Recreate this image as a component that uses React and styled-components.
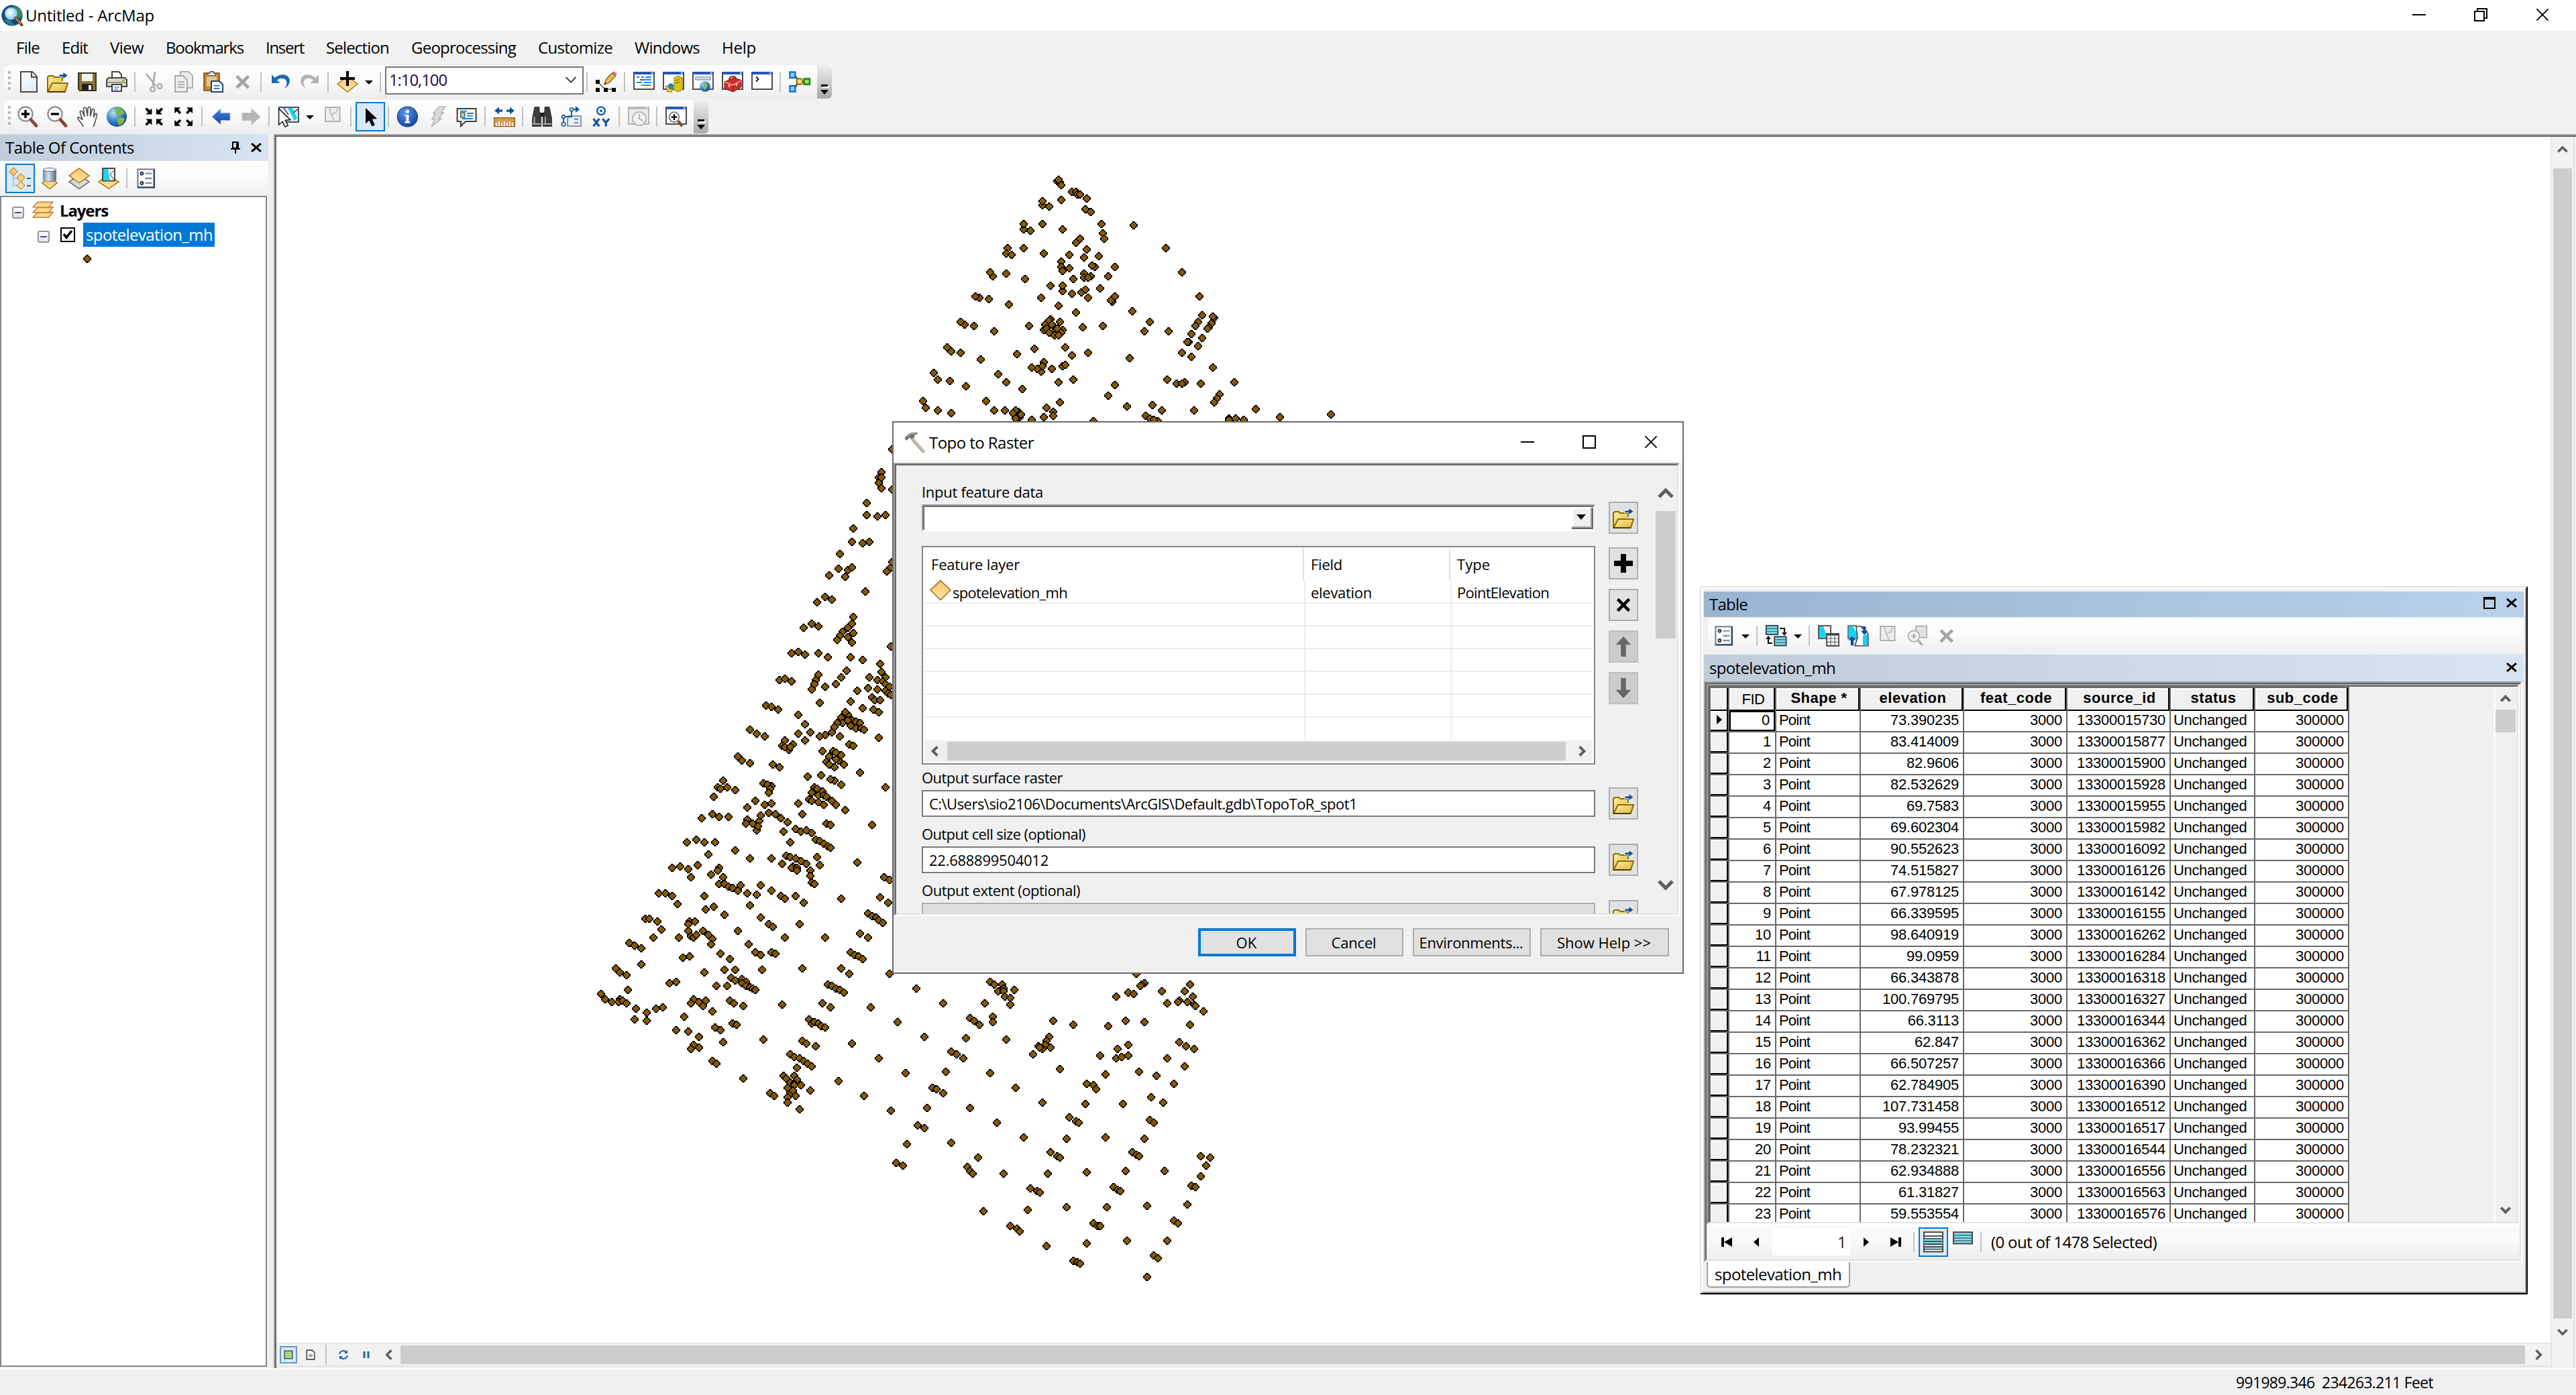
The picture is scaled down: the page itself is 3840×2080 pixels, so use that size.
import React, { useLayoutEffect, useRef } from "react";
import styled, { createGlobalStyle, css } from "styled-components";

/* ---------- base ---------- */

const UI = `"Open Sans", "Noto Sans", sans-serif`;
const GRID = `"Liberation Sans", Arial, sans-serif`;
const DARK = "#696969";
const MID = "#a0a0a0";
const LIGHT = "#e3e3e3";
const FACE = "#f0f0f0";
const BLUE = "#0078d7";

const Global = createGlobalStyle`
  html, body { margin: 0; padding: 0; background: ${FACE}; }
  * { box-sizing: border-box; }
`;

const LabelBox = styled.span`
  display: block;
  flex: none;
  width: ${(p) => p.$w}px;
  font-family: ${UI};
  font-size: ${(p) => p.$size || 24}px;
  font-weight: ${(p) => (p.$bold ? 700 : 400)};
  line-height: 30px;
  white-space: pre;
  color: ${(p) => p.$color || "#000"};
`;

/* A label whose tracking is set so that the text spans exactly w pixels. */
function Label({ w, size, bold, color, children }) {
  const ref = useRef(null);
  useLayoutEffect(() => {
    const el = ref.current;
    el.style.letterSpacing = "0px";
    const natural = el.getBoundingClientRect().width;
    el.style.letterSpacing = `${(w - natural) / String(children).length}px`;
  }, [w, children]);
  return (
    <LabelBox $w={w} $size={size} $bold={bold} $color={color}>
      <span ref={ref}>{children}</span>
    </LabelBox>
  );
}

const Svg = styled.svg`
  display: block;
  flex: none;
  width: ${(p) => p.$w || 32}px;
  height: ${(p) => p.$h || p.$w || 32}px;
  overflow: visible;
`;

const Icon = ({ children, size }) => (
  <Svg viewBox="0 0 16 16" $w={size}>
    {children}
  </Svg>
);

/* ---------- icons (16-unit grid) ---------- */

const DefsSvg = styled.svg`
  position: absolute;
  width: 0;
  height: 0;
`;

const Defs = () => (
  <DefsSvg aria-hidden="true">
    <defs>
      <linearGradient id="gold" x1="0" y1="0" x2="0" y2="1">
        <stop offset="0" stopColor="#f3c469" />
        <stop offset="1" stopColor="#ffe9a8" />
      </linearGradient>
      <linearGradient id="folder" x1="0" y1="0" x2="1" y2="1">
        <stop offset="0" stopColor="#fff0a0" />
        <stop offset="1" stopColor="#dcb53a" />
      </linearGradient>
      <linearGradient id="paper" x1="0" y1="0" x2="1" y2="1">
        <stop offset="0" stopColor="#ffffff" />
        <stop offset="1" stopColor="#dbe8f3" />
      </linearGradient>
      <linearGradient id="steel" x1="0" y1="0" x2="1" y2="0">
        <stop offset="0" stopColor="#7f90a5" />
        <stop offset="0.4" stopColor="#d8e2ee" />
        <stop offset="1" stopColor="#54687f" />
      </linearGradient>
      <linearGradient id="bluearrow" x1="0" y1="0" x2="0" y2="1">
        <stop offset="0" stopColor="#4b86e4" />
        <stop offset="1" stopColor="#123f9e" />
      </linearGradient>
      <radialGradient id="info" cx="0.4" cy="0.3" r="0.8">
        <stop offset="0" stopColor="#5b95ea" />
        <stop offset="1" stopColor="#0c3d9c" />
      </radialGradient>
      <radialGradient id="globe" cx="0.35" cy="0.3" r="0.8">
        <stop offset="0" stopColor="#bfe2fb" />
        <stop offset="0.5" stopColor="#3d86d0" />
        <stop offset="1" stopColor="#0d3c7c" />
      </radialGradient>
      <radialGradient id="lens" cx="0.4" cy="0.4" r="0.7">
        <stop offset="0" stopColor="#ffffff" />
        <stop offset="1" stopColor="#7cc6ec" />
      </radialGradient>
    </defs>
  </DefsSvg>
);

const AppLogo = () => (
  <Icon>
    <circle cx="8" cy="8" r="7.8" fill="#0f4a78" />
    <path d="M8 .4c4 0 7.4 3.2 7.5 7.4-1 2.4-2.6 3.2-4.4 2.2C12 6 9.600 3 8 .4z" fill="#2f8d63" />
    <path d="M2 11c1.500 3 4.500 4.600 8 4.200L6 11z" fill="#1f7f9a" />
    <circle cx="7.200" cy="6.600" r="4.300" fill="url(#lens)" stroke="#9fc6dc" strokeWidth="0.8" />
    <path d="M10.600 10l4.600 5" stroke="#6b3b1a" strokeWidth="2.200" strokeLinecap="round" />
    <path d="M10.600 10l4 4.300" stroke="#d8955a" strokeWidth="0.9" strokeLinecap="round" />
  </Icon>
);

const NewIcon = () => (
  <Icon>
    <path d="M2.500.5h8.500l3.500 3.500v11.500h-12z" fill="url(#paper)" stroke="#4a4a4a" />
    <path d="M10.500.5v4h4" fill="#fff" stroke="#4a4a4a" />
  </Icon>
);

const OpenIcon = () => (
  <Icon>
    <path d="M.5 15.500V4.500l1-1h3l1 1h6v3" fill="url(#folder)" stroke="#8a6d00" />
    <path d="M.7 15.500L4 9h11.500l-2 6.500z" fill="url(#folder)" stroke="#8a6d00" />
    <path d="M.5 15.500h13" stroke="#4f3d00" />
    <path d="M9 4.500V2.500h3V.7l3.600 2.600L12 5.900V4.300H9z" fill="#0b4fa3" stroke="#fff" strokeWidth="0.4" />
  </Icon>
);

const SaveIcon = () => (
  <Icon>
    <path d="M1.500 1.500h13v13h-12l-1-1z" fill="#8e7434" stroke="#3d3218" />
    <rect x="4" y="2" width="8" height="5.500" fill="#f2f2f2" />
    <rect x="4" y="9.500" width="8" height="5" fill="#222" />
    <rect x="9" y="10.500" width="2" height="3.500" fill="#f0f0f0" />
  </Icon>
);

const PrintIcon = () => (
  <Icon>
    <path d="M4.500 6V.5h5l2 2V6" fill="#fff" stroke="#444" />
    <path d="M.5 6.500l1.500-1.500h12l1.500 1.500v5h-15z" fill="#d9d8c4" stroke="#444" />
    <path d="M1 8.500h14" stroke="#777" strokeWidth="0.7" />
    <rect x="12" y="6.300" width="2" height="1.200" fill="#8fae3c" />
    <path d="M4.500 10h7v5h-7z" fill="#fff" stroke="#444" />
    <path d="M6 12h4M6 13.500h3" stroke="#4b86d8" strokeWidth="0.8" />
  </Icon>
);

const CutIcon = () => (
  <Icon>
    <path d="M2 2l7 9M8.500.5L7 11" stroke="#ababab" strokeWidth="1.400" fill="none" />
    <circle cx="6.800" cy="13.500" r="1.700" fill="none" stroke="#ababab" strokeWidth="1.200" />
    <circle cx="12" cy="11.300" r="1.700" fill="none" stroke="#ababab" strokeWidth="1.200" />
  </Icon>
);

const CopyIcon = () => (
  <Icon>
    <path d="M5.500.5h6l3 3v9h-9z" fill="#ededed" stroke="#b0b0b0" />
    <path d="M1.500 3.500h6l3 3v9h-9z" fill="#ededed" stroke="#a8a8a8" />
    <path d="M3.500 8h5M3.500 10h5M3.500 12h5" stroke="#b0b0b0" />
  </Icon>
);

const PasteIcon = () => (
  <Icon>
    <rect x="1" y="1.500" width="11.500" height="13" fill="#c4873a" stroke="#7a4b12" strokeWidth="0.8" />
    <rect x="3" y="3.500" width="7.500" height="8" fill="#e9c48d" />
    <path d="M4 3.500v-2h1.500V.4h2.600v1.100H9.600v2z" fill="#e8e8e8" stroke="#555" strokeWidth="0.7" />
    <path d="M6.500 7.500h6l2.500 2.500v5.500H6.500z" fill="#fff" stroke="#1e4470" />
    <path d="M8.300 11h4.500M8.300 13h4.500" stroke="#2f80d0" />
  </Icon>
);

const GrayX = () => (
  <Icon>
    <path d="M3.400 3.800l8.800 8.600M12.200 3.800l-8.800 8.600" stroke="#a6a6a6" strokeWidth="2.400" fill="none" />
  </Icon>
);

const UndoIcon = ({ flip, color = "#1f66ad" }) => (
  <Icon>
    <g transform={flip ? "translate(16 0) scale(-1 1)" : undefined}>
      <path d="M1.500 2.500V9h6.200L5.500 6.700c2-1.700 5.500-1.800 6.800.4 1 1.900.3 3.900-1.600 5.900 3.700-2 5.100-4.900 3.700-7.900C12.600 2 7.600 1.600 3.800 5z" fill={color} />
    </g>
  </Icon>
);

const AddDataIcon = () => (
  <Icon>
    <path d="M8 4l7.500 5.500L8 15.500.5 9.500z" fill="url(#gold)" stroke="#a9741b" strokeWidth="0.7" />
    <path d="M8 0v11M2.500 5.500h11" stroke="#000" strokeWidth="2" />
  </Icon>
);

const EditorIcon = () => (
  <Icon>
    <path d="M1.500 8L7 13.500H14.500" fill="none" stroke="#555" strokeWidth="0.7" />
    <path d="M0 6.500h3v3H0zM0 12.500h3v3H0zM6 12.500h3v3H6zM12 12.500h3v3h-3z" fill="#000" />
    <path d="M6.500 10l1.200-3.700L12 1.500l2.700 2.200-4.500 4.800z" fill="#f2c04a" stroke="#6a4b12" strokeWidth="0.6" />
    <path d="M12 1.500L13.300 0l2.700 2.200-1.300 1.500z" fill="#c96f6f" />
    <path d="M6.500 10l.6-1.700 1.100.9z" fill="#222" />
  </Icon>
);

const WindowFrame = ({ gray }) => (
  <>
    <rect x="0.5" y="1" width="15" height="12.500" fill={gray ? "#ececec" : "#fff"} stroke={gray ? "#b4b4b4" : "#4d4d4d"} />
    <rect x="0.5" y="0.5" width="15" height="2" fill={gray ? "#b8b8b8" : "#2456b8"} />
    <rect x="13.500" y="1" width="1.200" height="1" fill="#e9eefb" />
  </>
);

const TocWindowIcon = () => (
  <Icon>
    <WindowFrame />
    <path d="M2.500 4.500h2M6 4.500h2M9 4.500h4.500M5 6.500h8.500M2.500 8.500h4M8 8.500h5.500M6 10.500h7" stroke="#1f86e0" strokeWidth="0.9" />
    <path d="M5 6.500h2" stroke="#e02020" />
    <path d="M5.500 10.500h2" stroke="#6fc020" />
  </Icon>
);
const CatalogIcon = () => (
  <Icon>
    <WindowFrame />
    <path d="M8.500 5l3-1.500 3 1.500v9l-3 1.500-3-1.500z" fill="#dcc315" stroke="#8a7a00" strokeWidth="0.5" />
    <path d="M9.500 7l3-.8M9.500 9l3-.8" stroke="#776800" strokeWidth="0.6" />
    <path d="M2 11h5v4.500H3.500z" fill="#e6cc1d" stroke="#8a7a00" strokeWidth="0.5" />
    <circle cx="6" cy="11.300" r="2.200" fill="#2d7fb8" />
  </Icon>
);
const SearchWindowIcon = () => (
  <Icon>
    <WindowFrame />
    <rect x="2.500" y="4.500" width="11" height="2" fill="#d5dff0" stroke="#8a97b3" strokeWidth="0.7" />
    <circle cx="9.500" cy="11.500" r="3.900" fill="url(#globe)" />
    <path d="M8 8.500l2.500.6.500 2.400-2 2.800z" fill="#7fc25b" />
  </Icon>
);
const ToolboxIcon = () => (
  <Icon>
    <WindowFrame />
    <path d="M2 8L9 5l5.500 1.800v5L8.500 15.500 2 13z" fill="#cf2f2f" stroke="#7a1010" strokeWidth="0.5" />
    <path d="M2.300 8.300l6 2.200 6-3.400" fill="none" stroke="#f39a9a" strokeWidth="0.8" />
    <path d="M5.500 6.700c0-2.700 4.500-3.700 5-1.200" fill="none" stroke="#a51a1a" strokeWidth="1.100" />
    <path d="M5.500 10v2M11 9v1.800" stroke="#f9dcdc" strokeWidth="1" />
    <path d="M8.400 10.700v4.500" stroke="#8e1414" strokeWidth="0.6" />
  </Icon>
);
const PythonIcon = () => (
  <Icon>
    <WindowFrame />
    <path d="M3.500 4.300L5.300 6 3.500 7.700" fill="none" stroke="#222" />
  </Icon>
);
const ModelIcon = () => (
  <Icon>
    <path d="M4 2.500l3 4.500M4 13.500l3-5.500M10 8h1.500" stroke="#222" fill="none" />
    <rect x="0.7" y="0.7" width="4" height="4.300" fill="#8cc8f8" stroke="#1670c8" strokeWidth="1.200" />
    <rect x="0.7" y="11" width="4" height="4.300" fill="#8cc8f8" stroke="#1670c8" strokeWidth="1.200" />
    <circle cx="8" cy="7.800" r="2.200" fill="#ffe28a" stroke="#9a7000" strokeWidth="1.100" />
    <rect x="11.300" y="5.700" width="4.200" height="4.200" fill="#8be069" stroke="#17830d" strokeWidth="1.200" />
  </Icon>
);

const Magnifier = ({ sign }) => (
  <Icon>
    <circle cx="6" cy="6" r="5.300" fill="#fff" stroke="#8b8b8b" strokeWidth="1.100" />
    <path d={sign === "+" ? "M3 6h6M6 3v6" : "M3 6h6"} stroke="#000" strokeWidth="1.700" />
    <path d="M10 10.200l4 4.500" stroke="#8d4141" strokeWidth="2.400" strokeLinecap="round" />
  </Icon>
);
const HandIcon = () => (
  <Icon>
    <path
      d="M5 15.500C4.500 13 1 10.500.8 8.800c.9-1 2.600.5 3.700 1.700L2.600 4.500c.3-1.400 1.600-1 2 .1L6 8 5.300 2c.4-1.300 1.700-1.100 2 .1L8.300 7.500 8.500 1.500c.5-1.100 1.700-.9 1.900.2v6l1.200-4.900c.6-.9 1.700-.5 1.700.5l-.6 5.200 1.200-2.700c.7-.6 1.500-.1 1.300.9-.5 2.500-1.300 6-2.700 8.800"
      fill="#fff"
      stroke="#4b4b4b"
      strokeWidth="0.8"
    />
  </Icon>
);
const GlobeIcon = () => (
  <Icon>
    <circle cx="8" cy="8" r="7.500" fill="url(#globe)" />
    <path d="M6.500 1.500c3-.8 6 .8 7.300 3.500-.4 1.600-2.300 1-3.300 2.200-1.400.2-3.200-1-3.500-2.700zM9 8.800c2-.8 4.300-.2 5 1.200-.8 2.600-2.700 4.300-4.300 4.400C8.600 12.900 8 10.500 9 8.800z" fill="#7fb84a" />
  </Icon>
);
const ArrowHead = ({ x, y, r }) => (
  <g transform={`translate(${x} ${y}) rotate(${r})`}>
    <path d="M-2.500 2V-2.500H2L.4-1 2.500 1.300 1.300 2.500-1 .4z" fill="#000" />
  </g>
);
const FixedIn = () => (
  <Icon>
    <ArrowHead x={3.700} y={3.700} r={180} />
    <ArrowHead x={12} y={3.700} r={270} />
    <ArrowHead x={3.700} y={12.300} r={90} />
    <ArrowHead x={12} y={12.300} r={0} />
  </Icon>
);
const FixedOut = () => (
  <Icon>
    <ArrowHead x={3.600} y={3.600} r={0} />
    <ArrowHead x={12} y={3.600} r={90} />
    <ArrowHead x={3.600} y={12.400} r={270} />
    <ArrowHead x={12} y={12.400} r={180} />
  </Icon>
);
const BackIcon = ({ flip, gray }) => (
  <Icon>
    <g transform={flip ? "translate(16 0) scale(-1 1)" : undefined}>
      <path d="M1 8l6.500-6v3.200h7v5.600h-7V14z" fill={gray ? "#b5b5b5" : "url(#bluearrow)"} stroke={gray ? "#c4c4c4" : "#a9c0ee"} strokeWidth="0.5" />
    </g>
  </Icon>
);
const SelectIcon = () => (
  <Icon>
    <rect x="1" y="1" width="14.500" height="11" fill="#e8eef2" stroke="#4b5560" />
    <path d="M7.500 1.500h3.500l3.500 7.500-2 2z" fill="#16d3ee" />
    <path d="M4.500 1.500l3.500 5M15 2.500l-3.500 2.500" stroke="#4b5560" strokeWidth="0.8" />
    <path d="M.8 2v12l2.800-2.400 1.900 4 2.100-1-1.900-3.900 3.700-.4z" fill="#fff" stroke="#222" strokeWidth="0.8" />
  </Icon>
);
const ClearIcon = () => (
  <Icon>
    <rect x="2.500" y="1" width="10.800" height="10.500" fill="#ededed" stroke="#b2b2b2" />
    <path d="M5.500 1.500l1.500 5 3.500-1.500 1-3.500M7 6.500l2 4.500" fill="none" stroke="#c2c2c2" />
  </Icon>
);
const PointerIcon = () => (
  <Icon>
    <path d="M4.500 1.500v11.700l2.700-2.500 2 4.600 2.200-1-2-4.400 3.600-.4z" fill="#0a0a0a" />
  </Icon>
);
const InfoIcon = () => (
  <Icon>
    <circle cx="7.700" cy="8" r="7.500" fill="url(#info)" stroke="#163f8c" strokeWidth="0.6" />
    <circle cx="7.700" cy="4" r="1.300" fill="#fff" />
    <path d="M5.700 6.600h3v5h1v1.200h-4v-1.200h1V7.800h-1z" fill="#fff" />
  </Icon>
);
const BoltIcon = () => (
  <Icon>
    <path d="M9.500.5H14L10.500 5H12.500L9 9.500H11L3.500 15.500 6 10H4L6.500 5.500H5z" fill="#dcdcdc" stroke="#b5b5b5" strokeWidth="0.8" />
  </Icon>
);
const PopupIcon = () => (
  <Icon>
    <path d="M.8 2h14v9.500H7L3.500 15v-3.500H.8z" fill="#fff" stroke="#3c3c3c" />
    <rect x="3.300" y="4.800" width="3" height="3.700" fill="#f3cf3e" stroke="#2271c4" strokeWidth="0.8" />
    <path d="M3 3.800h5M8 5.500h5M8 7.300h4.500M4.500 9.500h8" stroke="#1d7ad6" strokeWidth="0.9" />
  </Icon>
);
const MeasureIcon = () => (
  <Icon>
    <path d="M.5 3.500L4 .8v1.900h2.500v1.700H4v1.800zM15.500 3.500L12 .8v1.900H9.500v1.700H12v1.800z" fill="#0c4f9e" />
    <rect x="0.300" y="8.800" width="15.400" height="6.500" fill="#d59a52" stroke="#8a5415" strokeWidth="0.6" />
    <path d="M2 15v-2.500M4 15v-3.500M6 15v-2.500M8 15v-3.500M10 15v-2.500M12 15v-3.500M14 15v-2.500" stroke="#fff" strokeWidth="0.900" />
  </Icon>
);
const FindIcon = () => (
  <Icon>
    <path d="M2.500.8h3.500v3l1.300 2.400v9H.8V9zM13.500.8H10v3L8.700 6.200v9h6.500V9z" fill="#3c3c3c" stroke="#222" strokeWidth="0.4" />
    <rect x="6.500" y="5" width="3" height="3" fill="#222" />
    <path d="M2.300 8v5M10.400 8v5" stroke="#9a9a9a" strokeWidth="1.100" />
    <path d="M1 13.400h6M9 13.400h6" stroke="#d0d0d0" strokeWidth="0.7" />
  </Icon>
);
const RouteIcon = () => (
  <Icon>
    <path d="M6 7.500h9v7.500H5V10z" fill="#e8f0f6" stroke="#5b7ea0" strokeWidth="0.8" />
    <path d="M10 9.800h3M10 12.500h3" stroke="#3b6a98" strokeWidth="0.8" />
    <path d="M2 13.500V8h6V2.500h4" fill="none" stroke="#0f5aa6" />
    <path d="M11 0l3 2.500-3 2.500z" fill="#0f5aa6" />
    <circle cx="2" cy="8" r="1.200" fill="#fff" stroke="#0f5aa6" strokeWidth="0.8" />
    <circle cx="2" cy="13.600" r="1.400" fill="#fff" stroke="#0f5aa6" strokeWidth="0.8" />
    <circle cx="8" cy="2.600" r="1.200" fill="#fff" stroke="#0f5aa6" strokeWidth="0.8" />
  </Icon>
);
const GoToXYIcon = () => (
  <Icon>
    <circle cx="8" cy="3.600" r="2.900" fill="#fff" stroke="#125fae" strokeWidth="1.200" />
    <circle cx="8" cy="3.600" r="1" fill="#125fae" />
    <path d="M2.300 9.500l4.400 5.700M6.700 9.500l-4.400 5.700M9.200 9.500l2.400 3 2.400-3M11.600 12v3.300" fill="none" stroke="#0f4f96" strokeWidth="1.500" />
  </Icon>
);
const TimeIcon = () => (
  <Icon>
    <WindowFrame gray />
    <circle cx="8.500" cy="9.500" r="5" fill="#f1f1f1" stroke="#bbb" />
    <path d="M8.500 6v3.500l2.500 1.500" fill="none" stroke="#b0b0b0" />
  </Icon>
);
const ViewerIcon = () => (
  <Icon>
    <WindowFrame />
    <circle cx="6.500" cy="8.300" r="3.700" fill="#fff" stroke="#777" strokeWidth="0.900" />
    <path d="M4.300 8.300h4.400M6.500 6.100v4.400" stroke="#000" strokeWidth="1.200" />
    <path d="M9.500 11.300l3 3.700" stroke="#8d4141" strokeWidth="2.200" />
  </Icon>
);

const DrawingOrderIcon = () => (
  <Icon>
    <path d="M3 3v10.500h5M3 8h5" fill="none" stroke="#a9c8de" />
    <path d="M3 0l3 3-3 3-3-3zM8.500 4.500l3 3-3 3-3-3zM8.500 10.300l3 2.900-3 2.900-3-2.900z" fill="url(#gold)" stroke="#c48a32" strokeWidth="0.6" />
    <path d="M13 8h3M13 13.500h3" stroke="#2a6a98" strokeWidth="1.100" />
  </Icon>
);
const SourceIcon = () => (
  <Icon>
    <path d="M2.300 11.300L8 8l5.700 3.300L8 15.800z" fill="url(#gold)" stroke="#a9741b" strokeWidth="0.7" />
    <path d="M3.200 1.400v7.800c0 1.700 9.600 1.700 9.600 0V1.400z" fill="url(#steel)" stroke="#5f7288" strokeWidth="0.4" />
    <ellipse cx="8" cy="1.500" rx="4.800" ry="1.300" fill="#eef3f8" stroke="#5f7288" strokeWidth="0.5" />
  </Icon>
);
const VisibilityIcon = () => (
  <Icon>
    <path d="M8 5.500l7.500 5L8 15.800l-7.500-5.300z" fill="#d9d9d9" stroke="#707070" strokeWidth="0.8" />
    <path d="M8 .4l7.500 5.600L8 11.300.5 6z" fill="url(#gold)" stroke="#b77c1d" strokeWidth="0.8" />
  </Icon>
);
const SelectionListIcon = () => (
  <Icon>
    <path d="M8 5.500l7.500 5L8 15.600l-7.500-5.100z" fill="url(#gold)" stroke="#b77c1d" strokeWidth="0.8" />
    <rect x="3.500" y="0.500" width="9" height="9.300" fill="#f2f2f2" stroke="#4a4a4a" />
    <path d="M4 1h3.500l1.500 8.300H4z" fill="#19d4f2" />
    <path d="M9 5l3-3M9 5l3 4" stroke="#888" strokeWidth="0.7" />
  </Icon>
);
const OptionsIcon = () => (
  <Icon>
    <rect x="1.700" y="1.200" width="12.200" height="13.500" fill="#fff" stroke="#6a7b92" />
    <path d="M13.900 1.200v13.500H1.700" fill="none" stroke="#2f4766" strokeWidth="1.200" />
    <circle cx="4.700" cy="4.300" r="1" fill="#fff" stroke="#222" strokeWidth="0.900" />
    <circle cx="4.700" cy="11.500" r="1" fill="#fff" stroke="#222" strokeWidth="0.900" />
    <path d="M7.200 4.300h5M7.200 8h5M7.200 11.500h5" stroke="#8493a8" strokeWidth="1.200" />
  </Icon>
);
const TableStack = ({ x, y }) => (
  <g transform={`translate(${x} ${y})`}>
    <rect x="0.400" y="0.400" width="8.700" height="6.600" fill="#7fdbe6" stroke="#2e3a44" strokeWidth="0.9" />
    <path d="M.4 2.600h8.700M.4 4.800h8.700" stroke="#2e7f93" strokeWidth="0.7" />
  </g>
);
const RelatedIcon = () => (
  <Icon>
    <TableStack x={0} y={0} />
    <TableStack x={6.200} y={8.300} />
    <path d="M10.500 2.500h3.500v4M5 13.500H2v-4" fill="none" stroke="#111" strokeWidth="1.100" />
    <path d="M12 5.500h4L14 8zM0 10.500h4L2 8z" fill="#111" />
  </Icon>
);
const SelectByAttrIcon = () => (
  <Icon>
    <rect x="0.500" y="0.500" width="9" height="9.500" fill="#fff" stroke="#444" strokeWidth="0.900" />
    <path d="M1 1h3l2 5.500v3.100H1z" fill="#16d3f2" />
    <path d="M6.500 6.500h9v9h-9z" fill="#fff" stroke="#444" strokeWidth="0.900" />
    <path d="M6.500 7.200h9" stroke="#444" strokeWidth="1.200" />
    <path d="M6.500 10h9M6.500 12.700h9M9.500 7v8.500M12.500 7v8.500" stroke="#666" strokeWidth="0.600" />
  </Icon>
);
const SwitchSelIcon = () => (
  <Icon>
    <path d="M.5.5h6l2 3v6.500h-8z" fill="#fff" stroke="#444" strokeWidth="0.800" />
    <path d="M.8.8h3.400L7 6v3.600H.8z" fill="#16d3f2" />
    <path d="M6.500 1h4l4.900 5.500v9H5.500l2-6z" fill="#fff" stroke="#444" strokeWidth="0.800" />
    <path d="M11.500 8l3.600-1.500v8.700h-3.600z" fill="#16d3f2" />
    <path d="M3.500 8.200l2.700 3H4.600v4H2.400v-4H.8zM10.300 1h3.400v3.200h1.600L12.600 7.500 10 4.200h1.600V2.800h-1.300z" fill="#0b4fa8" />
  </Icon>
);
const ZoomSelIcon = () => (
  <Icon>
    <rect x="7" y="0.800" width="8" height="8.500" fill="#e2e2e2" stroke="#b2b2b2" />
    <circle cx="5.500" cy="8.300" r="4.200" fill="#f3f3f3" stroke="#b0b0b0" />
    <path d="M3.500 8.300h4M5.500 6.300v4" stroke="#a8a8a8" />
    <path d="M8.800 11.500l3 3.500" stroke="#b0b0b0" strokeWidth="1.800" />
  </Icon>
);
const AllRecordsIcon = () => (
  <Icon>
    <rect x="1" y="0.600" width="14" height="14.600" fill="#fff" stroke="#474747" />
    <path d="M1 5h14v5.500H1z" fill="#7fe0ea" />
    <path d="M1 3.500h14M1 5.400h14M1 7.500h14M1 9.500h14M1 11.500h14M1 13.300h14" stroke="#474f55" strokeWidth="0.9" />
    <path d="M1.500 12.400h13" stroke="#7fe0ea" strokeWidth="0.8" />
  </Icon>
);
const SelectedRecordsIcon = () => (
  <Icon>
    <rect x="1" y="0.600" width="14" height="8.600" fill="#7fe0ea" stroke="#474747" />
    <path d="M1 2.900h14M1 5h14M1 7h14" stroke="#3f6b73" strokeWidth="0.8" />
  </Icon>
);
const LayerStackIcon = () => (
  <Icon>
    {[8.600, 4.900, 1].map((y) => (
      <path key={y} d={`M4.300 ${y}h11.200L12.300 ${y + 4}H.5z`} fill="url(#gold)" stroke="#b5651d" strokeWidth="0.6" />
    ))}
  </Icon>
);
const LayerIcon = () => (
  <Icon>
    <path d="M8 .8l7.500 7.100L8 15.200.5 7.900z" fill="url(#gold)" stroke="#b27a24" strokeWidth="0.9" />
  </Icon>
);
const HammerIcon = () => (
  <Icon>
    <path d="M6 5l8.500 9.500" stroke="#c9c2ae" strokeWidth="2.300" strokeLinecap="round" />
    <path d="M6 6.400l8 9" stroke="#8d8777" strokeWidth="0.6" />
    <path d="M.3 4.800C2 1.500 5.500-.3 10 .6L9.600 1.800C8 1.600 7.300 2.300 8 3.500L5.500 5.500 4 4.300 1.500 6.500z" fill="#707070" />
    <path d="M2.500 3.500C4 2 6 1 8.500 1" stroke="#c8c8c8" strokeWidth="0.6" fill="none" />
  </Icon>
);

const ChevronPaths = { up: "M1 7l5-5 5 5", down: "M1 2l5 5 5-5", left: "M7 1L2 6l5 5", right: "M2 1l5 5-5 5" };
const Chevron = ({ dir, size = 16, weight = 2.400, color = "#606060" }) => {
  const vert = dir === "up" || dir === "down";
  return (
    <Svg viewBox={vert ? "0 0 12 9" : "0 0 9 12"} $w={vert ? size : size * 0.75} $h={vert ? size * 0.75 : size}>
      <path d={ChevronPaths[dir]} fill="none" stroke={color} strokeWidth={weight} />
    </Svg>
  );
};
const Triangle = ({ dir = "down", w = 12, h = 6 }) => {
  const d = { down: "M0 0h12L6 12z", right: "M0 0v12L12 6z", left: "M12 0v12L0 6z" }[dir];
  return (
    <Svg viewBox="0 0 12 12" preserveAspectRatio="none" $w={w} $h={h}>
      <path d={d} fill="#000" />
    </Svg>
  );
};
const Cross = ({ size = 16, weight = 1.800, color = "#000", h }) => (
  <Svg viewBox="0 0 10 10" preserveAspectRatio="none" $w={size} $h={h || size}>
    <path d="M.7.7l8.600 8.600M9.300.7L.7 9.300" stroke={color} strokeWidth={weight} fill="none" />
  </Svg>
);

/* ---------- application chrome ---------- */

const Frame = styled.div`
  position: relative;
  width: 3840px;
  height: 2080px;
  display: flex;
  flex-direction: column;
  overflow: hidden;
  background: ${FACE};
`;
const TitleBar = styled.header`
  height: 46px;
  flex: none;
  display: flex;
  align-items: center;
  gap: 4px;
  padding: 0 40px 0 2px;
  background: #fff;
`;
const WindowButtons = styled.div`
  display: flex;
  align-items: center;
  margin-left: auto;
  gap: ${(p) => p.$gap}px;
  padding-bottom: 2px;
`;
const MenuBar = styled.nav`
  height: 50px;
  flex: none;
  display: flex;
  align-items: center;
  gap: 33px;
  padding-left: 24px;
  background: #f1f1f1;
`;
const ToolbarRow = styled.div`
  height: 52px;
  flex: none;
  display: flex;
  background: #f1f1f1;
`;
const Toolbar = styled.div`
  height: 50px;
  margin: 1px 0 0 6px;
  padding-left: 14px;
  position: relative;
  display: flex;
  align-items: center;
  border-radius: 6px 0 0 6px;
  background: linear-gradient(#fdfdfd, #f9f9f9 50%, #ededed);
`;
const Grip = styled.span`
  position: absolute;
  left: 6px;
  top: 9px;
  width: 4px;
  height: 28px;
  background: repeating-linear-gradient(#b9b9b9 0 4px, transparent 4px 8px);
`;
const Overflow = styled.span`
  width: 22px;
  height: 50px;
  margin-left: ${(p) => p.$gap}px;
  display: flex;
  flex-direction: column;
  align-items: center;
  justify-content: flex-end;
  gap: 5px;
  padding-bottom: 6px;
  border-radius: 0 6px 6px 0;
  background: linear-gradient(#efefef, #a9a9a9);
`;
const OverflowBar = styled.i`
  width: 10px;
  height: 3px;
  background: #000;
  box-shadow: 2px 2px 0 #fff;
`;
const ToolButton = styled.span`
  width: 44px;
  height: 44px;
  flex: none;
  display: flex;
  align-items: center;
  justify-content: center;
  ${(p) =>
    p.$on &&
    css`
      border: 2px solid ${BLUE};
      background: #dbe9f6;
    `}
`;
const DropArrow = styled.span`
  width: 22px;
  flex: none;
  display: flex;
  justify-content: center;
  padding: 2px 2px 0 0;
`;
const Separator = styled.span`
  width: 12px;
  height: 30px;
  flex: none;
  padding-left: 4px;
  &::before {
    content: "";
    display: block;
    width: 2px;
    height: 100%;
    background: #c3c3c3;
  }
`;
const ScaleBox = styled.div`
  width: 296px;
  height: 42px;
  margin-top: -4px;
  flex: none;
  display: flex;
  align-items: center;
  justify-content: space-between;
  padding: 0 8px 2px 4px;
  border: 2px solid #767676;
  background: #fff;
`;

const Main = styled.main`
  height: 1840px;
  flex: none;
  display: flex;
`;
const TocPane = styled.aside`
  width: 400px;
  margin-right: 8px;
  flex: none;
  display: flex;
  flex-direction: column;
`;
const PaneHeader = styled.div`
  height: ${(p) => p.$h || 40}px;
  flex: none;
  display: flex;
  align-items: center;
  padding: 0 10px 0 8px;
  gap: 16px;
  background: ${(p) =>
    p.$active ? "linear-gradient(90deg, #99b4d1, #b9d1ea)" : "linear-gradient(90deg, #bfcddb, #d7e4f2)"};
`;
const HeaderButtons = styled.span`
  margin-left: auto;
  display: flex;
  align-items: center;
  gap: 16px;
  padding-bottom: ${(p) => p.$lift || 0}px;
`;
const TocTools = styled.div`
  height: 52px;
  flex: none;
  display: flex;
  align-items: center;
  padding-left: 8px;
  background: linear-gradient(#fdfdfd, #f9f9f9 50%, #efefef);
`;
const Tree = styled.div`
  width: 398px;
  height: 1746px;
  border: 2px solid #828790;
  background: #fff;
  padding-top: 2px;
`;
const TreeRow = styled.div`
  height: 36px;
  display: flex;
  align-items: center;
  padding-left: ${(p) => p.$indent}px;
`;
const Expander = styled.span`
  width: 18px;
  height: 18px;
  flex: none;
  display: flex;
  align-items: center;
  justify-content: center;
  margin-top: ${(p) => p.$drop || 0}px;
  border: 2px solid #979797;
  border-radius: 3px;
  background: linear-gradient(#fff, #e2e2e2);
  &::before {
    content: "";
    width: 10px;
    height: 2px;
    background: #3a50a8;
  }
`;
const CheckBox = styled.span`
  width: 22px;
  height: 22px;
  flex: none;
  margin: 0 12px 0 16px;
  border: 2px solid #000;
  background: #fff;
`;
const SelectedName = styled.span`
  height: 36px;
  width: 196px;
  display: flex;
  align-items: center;
  padding-left: 4px;
  background: ${BLUE};
`;
const IconSlot = styled.span`
  display: flex;
  margin: ${(p) => p.$m};
`;

const MapPane = styled.section`
  flex: 1;
  display: flex;
  flex-direction: column;
  border-left: 2px solid ${MID};
  border-top: 2px solid ${MID};
`;
const MapInner = styled.div`
  flex: 1;
  display: flex;
  border-left: 2px solid ${DARK};
  border-top: 2px solid ${DARK};
`;
const MapColumn = styled.div`
  width: 3390px;
  flex: none;
  display: flex;
  flex-direction: column;
`;
const MapCanvas = styled.svg`
  display: block;
  width: 3390px;
  height: 1798px;
  background: #fff;
`;
const MapFooter = styled.div`
  height: 36px;
  display: flex;
  align-items: center;
  border-top: 2px solid #e5e5e5;
  border-bottom: 2px solid #e5e5e5;
  background: #f2f2f2;
`;
const FooterTools = styled.div`
  width: 152px;
  display: grid;
  grid-template-columns: 36px 30px 18px 32px 36px;
  align-items: center;
  justify-items: center;
`;
const ViewToggle = styled.span`
  width: 26px;
  height: 26px;
  display: flex;
  align-items: center;
  justify-content: center;
  border: 2px solid #5d9bd3;
  background: #d9e9f5;
`;
const HTrack = styled.div`
  flex: 1;
  height: 30px;
  display: flex;
  align-items: center;
  justify-content: space-between;
  padding: 0 12px 0 10px;
`;
const HThumb = styled.span`
  flex: 1;
  height: 28px;
  margin: ${(p) => p.$m};
  background: #cdcdcd;
`;
const VTrack = styled.div`
  width: 36px;
  display: flex;
  flex-direction: column;
  align-items: center;
  justify-content: space-between;
  padding: 13px 0 48px;
  border-left: 2px solid #e5e5e5;
  border-right: 2px solid #e5e5e5;
  background: #f2f2f2;
`;
const VThumb = styled.span`
  width: 28px;
  flex: 1;
  margin: 22px 0 14px;
  background: #cdcdcd;
`;
const StatusBar = styled.footer`
  height: 40px;
  display: flex;
  align-items: center;
  padding-left: 3333px;
  border-top: 2px solid #fff;
  background: ${FACE};
`;

/* ---------- survey points ---------- */

/* Each sheet: origin, units per map pixel, then x,y pairs in sheet units. */
const SHEETS = [
  {
    at: [1340, 240],
    per: [2.24, 3],
    xy: "530,90 537,97 541,108 533,84 579,137 590,140 598,150 605,150 627,168 542,174 479,198 479,180 502,204 623,216 641,228 417,306 417,282 479,282 676,282 785,288 439,312 546,306 680,324 685,348 605,348 591,366 362,390 417,390 627,396 892,390 358,414 376,420 484,414 569,420 618,432 667,426 542,450 542,472 569,480 546,490 656,473 645,467 721,474 945,498 313,517 304,497 358,504 421,528 583,528 618,502 641,515 618,521 632,521 699,516 506,558 546,582 546,558 578,594 609,588 622,576 672,570 632,612 475,612 533,648 591,678 721,606 714,630 708,624 780,672 1003,606 267,612 255,606 300,618 367,642 220,734 206,718 251,738 318,762 434,738 506,706 502,712 490,730 510,732 538,720 485,755 492,750 520,760 548,755 540,765 530,750 502,770 520,778 534,782 614,744 680,738 838,720 820,762 900,762 1012,690 1055,700 1048,695 998,720 1043,725 990,740 1034,746 1030,750 977,774 1012,792 967,808 964,810 998,828 945,858 977,876 1048,924 452,840 394,864 556,834 578,870 632,858 771,882 161,833 174,852 206,858 273,888 484,898 475,940 462,930 479,915 444,924 510,930 546,918 556,912 116,948 129,978 170,984 224,1008 332,954 358,990 412,1020 533,990 583,978 721,1002 699,1050 896,978 927,996 956,990 945,996 1008,996 1120,990 1070,1043 1062,1062 1052,1080 80,1074 90,1104 129,1116 174,1128 291,1074 318,1116 354,1116 400,1120 389,1115 380,1130 405,1145 408,1135 389,1152 492,1104 515,1122 515,1140 484,1146 444,1160 538,1080 650,1166 762,1098 847,1092 878,1116 986,1116 824,1140 838,1152 866,1165 852,1158 1192,1110 1272,1146 1442,1134 1102,1150 1102,1158 1124,1150 1152,1160",
  },
  {
    at: [880, 640],
    per: [3, 1.96],
    xy: "1350,60 1302,125 1288,141 1302,141 1302,173 1288,157 1352,176 1236,215 1236,251 1284,255 1320,251 1176,290 1170,329 1218,333 1248,329 1116,364 1110,408 1068,427 1150,411 1170,404 1140,431 1345,405 1326,415 1352,390 1230,474 1080,498 1049,490 1013,506 990,568 1020,576 954,580 1176,549 1170,568 1152,580 1128,592 1115,604 1104,615 1152,607 1176,596 1170,623 1344,635 900,655 930,651 960,658 1020,655 1062,666 1164,666 1218,674 1296,686 1302,710 1320,724 1248,725 1284,734 1310,735 1320,745 1335,752 1284,761 1320,765 1332,772 1345,778 1242,757 1194,764 846,733 870,729 900,737 1020,717 1010,733 1002,745 990,761 1049,752 1098,745 1122,725 1146,705 1026,800 1164,796 1258,784 1272,790 1296,792 1218,815 1266,820 1290,827 786,807 810,811 840,819 930,835 960,862 1152,835 1140,826 1122,843 1170,850 1152,850 1188,855 1206,859 1128,860 1104,857 1164,868 1090,870 1188,874 1210,873 1224,878 1080,886 1049,894 1026,898 1116,898 984,886 930,890 960,909 714,878 744,890 780,898 858,925 870,909 888,938 903,920 872,928 893,928 1158,921 1176,925 1290,902 1038,941 1086,941 1098,945 1122,952 1068,957 1110,970 1098,964 1056,974 1068,980 1134,980 1092,988 660,957 678,968 714,976 816,980 846,988 1206,1003 972,1015 1032,1011 1090,1026 1074,1023 1122,1039 594,1027 570,1046 582,1050 612,1047 648,1054 552,1074 774,1035 810,1043 792,1039 804,1052 798,1062 1320,1047 1002,1046 1014,1051 1038,1058 990,1062 1020,1070 1044,1072 1056,1076 978,1082 992,1084 1020,1089 1044,1098 1080,1086 1098,1097 738,1086 702,1105 780,1097 810,1094 930,1094 948,1125 1140,1113 498,1137 546,1125 576,1133 618,1133 702,1140 696,1152 726,1152 756,1144 762,1129 798,1121 828,1125 852,1137 882,1148 744,1172 750,1160 864,1176 1056,1152 1074,1156 1260,1156 918,1168 942,1176 966,1172 990,1180 1008,1199 1026,1205 1044,1212 1060,1218 1074,1223 894,1207 474,1199 432,1207 510,1207 558,1207 528,1243 648,1231 714,1254 810,1254 1014,1250 876,1246 894,1250 918,1254 942,1262 966,1270 858,1270 1026,1274 906,1276 900,1283 924,1282 924,1290 984,1290 984,1305 990,1325 1003,1329 1194,1266 366,1282 402,1278 438,1286 480,1274 450,1309 576,1280 570,1290 540,1301 594,1309 576,1329 600,1327 615,1335 635,1341 660,1348 672,1333 702,1356 744,1360 762,1333 810,1348 852,1364 870,1372 918,1364 954,1384 1122,1372 1314,1309 1338,1317 1296,1368 1332,1384 306,1356 336,1356 366,1364 390,1388 510,1364 516,1403 552,1395 600,1419 714,1391 762,1427 798,1447 816,1454 936,1447 1242,1415 1260,1421 1275,1428 1290,1434 1308,1442 246,1431 264,1431 300,1438 318,1462 282,1486 396,1486 444,1438 466,1438 440,1448 438,1465 448,1480 460,1486 474,1477 504,1466 528,1477 546,1490 540,1505 660,1466 708,1505 870,1486 1050,1486 1206,1474 1242,1486 174,1501 198,1509 228,1517 582,1533 624,1548 414,1544 444,1541 738,1529 762,1537 810,1529 828,1533 1164,1529 1182,1536 1200,1541 1218,1549 228,1563",
  },
  {
    at: [880, 1400],
    per: [1.6333, 3],
    xy: "62,131 71,148 88,161 326,138 352,138 418,138 516,132 611,132 630,156 728,156 277,150 209,191 192,198 342,174 352,184 369,180 378,192 369,200 378,207 388,215 395,224 403,229 307,210 333,210 578,204 588,210 599,220 607,228 618,240 92,228 794,222 26,245 37,270 53,282 72,270 69,282 80,278 89,288 111,312 137,330 137,366 108,360 160,312 176,306 251,270 245,288 264,282 280,276 274,300 340,276 349,288 372,300 297,324 467,294 565,288 585,306 683,306 228,348 859,288 961,288 973,192 984,204 1003,204 1007,222 992,234 1005,234 1032,228 1009,258 1022,264 1022,294 1330,154 1349,198 1343,204 1340,210 1310,240 1323,246 1281,258 1460,204 1391,234 1447,234 1466,258 1404,288 1435,278 1432,284 1454,282 1470,294 1473,302 1493,324 748,372 533,360 540,380 545,370 555,380 563,390 572,396 347,377 356,383 304,396 317,408 209,408 238,413 264,437 251,473 264,486 245,492 323,462 421,450 925,354 935,368 948,384 980,348 980,372 1127,366 1176,384 1303,366 1349,372 1261,390 1460,384 814,438 914,444 1012,450 1117,438 1112,455 1090,480 1107,475 1120,486 1100,494 1095,488 1078,516 637,468 516,456 526,468 549,480 703,534 878,504 891,516 908,534 486,516 496,528 509,533 518,545 530,560 539,571 503,577 298,546 307,558 1284,492 1310,474 1241,522 1281,534 1294,528 1310,522 1434,462 1450,480 1470,492 1404,534 1447,570 1143,582 1254,606 1336,594 1378,612 1421,648 470,612 478,622 496,612 486,640 503,630 495,645 512,655 480,665 498,655 486,688 492,678 500,702 480,708 480,732 536,678 509,762 438,690 448,702 372,624 604,636 666,702 768,600 865,594 973,600 832,666 843,672 859,690 1035,666 1209,648 1225,655 1232,672 1366,708 1395,732 732,768 820,756 924,756 1101,732 1206,738 1297,738 796,833 814,846 990,822 1166,797 1183,816 1189,822 1362,810 1373,822 771,918 879,912 1055,888 1160,894 1254,888 1349,894 944,978 1120,954 1137,972 1144,979 1320,954 1329,963 1337,972 1487,972 1509,978 1500,1014 1487,1062 745,1002 761,1014 918,1020 925,1038 932,1050 1006,1050 1114,1050 1209,1044 1303,1038 1398,1038 1463,1104 1473,1110 1072,1116 1087,1128 1095,1135 1274,1110 1283,1120 1290,1128 957,1218 1065,1212 1160,1200 1258,1200 1355,1194 1454,1188 1022,1284 1038,1297 1046,1308 1225,1272 1235,1282 1242,1284 1421,1260 1431,1272 1110,1374 1209,1362 1306,1350 1404,1350 1176,1440 1185,1448 1192,1453 1372,1416 1382,1428 1355,1512",
  },
];

const even = (n) => Math.round(n / 2) * 2;
const POINTS = SHEETS.flatMap(({ at, per, xy }) =>
  xy.split(" ").map((pair) => {
    const [x, y] = pair.split(",").map(Number);
    return [even(at[0] + x / per[0]) - 412, even(at[1] + y / per[1]) - 204];
  })
);

const PointSymbol = () => (
  <>
    <path d="M-2-6h4v2h2v2h2v4h-2v2h-2v2h-4v-2h-2v-2h-2v-4h2v-2h2z" fill="#000" />
    <path d="M-2-4h4v2h2v4h-2v2h-4v-2h-2v-4h2z" fill="#895a00" />
  </>
);

const SurveyMap = () => (
  <MapCanvas viewBox="0 0 3390 1798" shapeRendering="crispEdges">
    <defs>
      <g id="spot">
        <PointSymbol />
      </g>
    </defs>
    {POINTS.map(([x, y], i) => (
      <use key={i} href="#spot" x={x} y={y} />
    ))}
  </MapCanvas>
);

/* ---------- Topo to Raster dialog ---------- */

const Dialog = styled.section`
  position: absolute;
  left: 1330px;
  top: 628px;
  width: 1180px;
  height: 824px;
  display: flex;
  flex-direction: column;
  border: 2px solid #6b6b6b;
  background: ${FACE};
`;
const DialogTitle = styled.div`
  height: 60px;
  flex: none;
  display: flex;
  align-items: center;
  gap: 5px;
  padding: 0 37px 0 16px;
  background: #fff;
`;
const SunkenOuter = styled.div`
  height: ${(p) => p.$h}px;
  width: ${(p) => p.$w}px;
  flex: none;
  display: flex;
  flex-direction: column;
  border: 2px solid;
  border-color: ${MID} #fff #fff ${MID};
`;
const SunkenInner = styled.div`
  flex: 1;
  min-height: 0;
  display: flex;
  border: 2px solid;
  border-color: ${DARK} ${LIGHT} ${LIGHT} ${DARK};
  overflow: hidden;
`;
const Form = styled.div`
  width: 1106px;
  height: 696px;
  flex: none;
  padding: 24px 0 0 38px;
`;
const FieldLabel = styled.div`
  height: 30px;
  margin-top: ${(p) => p.$top || 0}px;
`;
const FieldRow = styled.div`
  height: 48px;
  display: flex;
  align-items: center;
  gap: 20px;
`;
const TextField = styled.div`
  width: 1004px;
  height: 40px;
  display: flex;
  align-items: center;
  padding: 0 0 1px 9px;
  border: 2px solid ${(p) => (p.$off ? "#adadad" : "#7a7a7a")};
  background: ${(p) => (p.$off ? "#dfdfdf" : "#fff")};
`;
const Combo = styled.div`
  width: 1004px;
  height: 40px;
  display: flex;
  justify-content: flex-end;
  border: 2px solid;
  border-color: ${MID} ${FACE} #fff ${MID};
  box-shadow: inset 2px 2px 0 ${DARK};
  background: #fff;
`;
const ComboButton = styled.span`
  width: 32px;
  height: 32px;
  margin: 3px 1px 0 0;
  display: flex;
  align-items: center;
  justify-content: center;
  padding: 0 4px 4px 0;
  background: ${FACE};
  box-shadow: inset -2px -2px 0 ${DARK}, inset -4px -4px 0 ${MID}, inset 2px 2px 0 #fff;
`;
const SquareButton = styled.span`
  width: 44px;
  height: 48px;
  flex: none;
  display: flex;
  align-items: center;
  justify-content: center;
  border: 2px solid ${(p) => (p.$off ? "#bfbfbf" : "#adadad")};
  background: ${(p) => (p.$off ? "#cccccc" : "#e1e1e1")};
`;
const ListRow = styled.div`
  display: flex;
  gap: 20px;
  margin-top: 18px;
`;
const ListButtons = styled.div`
  display: flex;
  flex-direction: column;
  gap: 14px;
  padding-top: 2px;
`;
const LayerList = styled.div`
  width: 1004px;
  height: 326px;
  display: flex;
  flex-direction: column;
  padding: 2px;
  border: 2px solid #828790;
  background: #fff;
`;
const ListHeader = styled.div`
  height: 48px;
  display: grid;
  grid-template-columns: 566px 218px 1fr;
`;
const ListHeaderCell = styled.div`
  display: flex;
  align-items: center;
  padding: 0 0 2px 10px;
  border-right: ${(p) => (p.$last ? "none" : "2px solid #e0e0e0")};
`;
const ListLine = styled.div`
  height: 34px;
  display: grid;
  grid-template-columns: 568px 218px 1fr;
  border-bottom: 2px solid ${(p) => (p.$last ? "#fff" : "#ededed")};
`;
const ListCell = styled.div`
  display: flex;
  align-items: center;
  padding-left: 8px;
  border-right: ${(p) => (p.$last ? "none" : "2px solid #ededed")};
`;
const ListScroll = styled.div`
  height: 32px;
  margin-top: auto;
  display: flex;
  align-items: center;
  padding: 0 10px;
  background: ${FACE};
`;
const FormScroll = styled.div`
  width: 30px;
  margin-left: 26px;
  display: flex;
  flex-direction: column;
  align-items: center;
  padding: 33px 0 34px;
`;
const FormThumb = styled.span`
  width: 30px;
  height: 190px;
  margin: 17px 0 auto;
  background: #cdcdcd;
`;
const DialogFooter = styled.div`
  flex: 1;
  display: flex;
  justify-content: flex-end;
  gap: 14px;
  padding: 18px 20px 0 0;
`;
const PushButton = styled.span`
  width: ${(p) => p.$w}px;
  height: 42px;
  display: flex;
  align-items: center;
  justify-content: center;
  padding: 0 2px 1px 0;
  border: ${(p) => (p.$default ? `4px solid ${BLUE}` : "2px solid #adadad")};
  background: #e1e1e1;
`;

const BrowseButton = () => (
  <SquareButton>
    <OpenIcon />
  </SquareButton>
);
const ArrowGlyph = ({ flip }) => (
  <Svg viewBox="0 0 24 32" $w={24} $h={30}>
    <path d="M12 0l12 13h-8v19H8V13H0z" fill="#666" transform={flip ? "translate(0 32) scale(1 -1)" : undefined} />
  </Svg>
);

const TopoDialog = () => (
  <Dialog>
    <DialogTitle>
      <HammerIcon />
      <Label w={156}>Topo to Raster</Label>
      <WindowButtons $gap={72}>
        <Svg viewBox="0 0 20 20" $w={20}>
          <path d="M0 10h20" stroke="#000" strokeWidth="2" />
        </Svg>
        <Svg viewBox="0 0 20 20" $w={20}>
          <rect x="1" y="1" width="18" height="18" fill="none" stroke="#000" strokeWidth="2" />
        </Svg>
        <Cross size={20} weight={0.9} />
      </WindowButtons>
    </DialogTitle>
    <SunkenOuter $h={676} $w={1172}>
      <SunkenInner>
        <Form>
          <FieldLabel>
            <Label w={181} size={22}>Input feature data</Label>
          </FieldLabel>
          <FieldRow>
            <Combo>
              <ComboButton>
                <Triangle w={14} h={8} />
              </ComboButton>
            </Combo>
            <BrowseButton />
          </FieldRow>
          <ListRow>
            <LayerList>
              <ListHeader>
                <ListHeaderCell>
                  <Label w={132} size={22}>Feature layer</Label>
                </ListHeaderCell>
                <ListHeaderCell>
                  <Label w={47} size={22}>Field</Label>
                </ListHeaderCell>
                <ListHeaderCell $last>
                  <Label w={49} size={22}>Type</Label>
                </ListHeaderCell>
              </ListHeader>
              <ListLine>
                <ListCell>
                  <IconSlot $m="-4px 0 0 0">
                    <LayerIcon />
                  </IconSlot>
                  <IconSlot $m="1px 0 0 2px">
                    <Label w={171} size={22}>spotelevation_mh</Label>
                  </IconSlot>
                </ListCell>
                <ListCell>
                  <IconSlot $m="1px 0 0 0">
                    <Label w={91} size={22}>elevation</Label>
                  </IconSlot>
                </ListCell>
                <ListCell $last>
                  <IconSlot $m="1px 0 0 0">
                    <Label w={137} size={22}>PointElevation</Label>
                  </IconSlot>
                </ListCell>
              </ListLine>
              {[0, 1, 2, 3, 4, 5].map((n) => (
                <ListLine key={n} $last={n === 5}>
                  <ListCell />
                  <ListCell />
                  <ListCell $last />
                </ListLine>
              ))}
              <ListScroll>
                <Chevron dir="left" size={16} weight={3} />
                <HThumb $m="0 18px 0 12px" />
                <Chevron dir="right" size={16} weight={3} />
              </ListScroll>
            </LayerList>
            <ListButtons>
              <SquareButton>
                <Svg viewBox="0 0 28 28" $w={28}>
                  <path d="M14 0v28M0 14h28" stroke="#000" strokeWidth="8" />
                </Svg>
              </SquareButton>
              <SquareButton>
                <Cross size={20} weight={2.200} />
              </SquareButton>
              <SquareButton $off>
                <ArrowGlyph />
              </SquareButton>
              <SquareButton $off>
                <ArrowGlyph flip />
              </SquareButton>
            </ListButtons>
          </ListRow>
          <FieldLabel $top={4}>
            <Label w={210} size={22}>Output surface raster</Label>
          </FieldLabel>
          <FieldRow>
            <TextField>
              <Label w={638} size={22}>{"C:\\Users\\sio2106\\Documents\\ArcGIS\\Default.gdb\\TopoToR_spot1"}</Label>
            </TextField>
            <BrowseButton />
          </FieldRow>
          <FieldLabel $top={6}>
            <Label w={244} size={22}>Output cell size (optional)</Label>
          </FieldLabel>
          <FieldRow>
            <TextField>
              <Label w={178} size={22}>22.688899504012</Label>
            </TextField>
            <BrowseButton />
          </FieldRow>
          <FieldLabel $top={6}>
            <Label w={236} size={22}>Output extent (optional)</Label>
          </FieldLabel>
          <FieldRow>
            <TextField $off />
            <BrowseButton />
          </FieldRow>
        </Form>
        <FormScroll>
          <Chevron dir="up" size={24} weight={2.600} />
          <FormThumb />
          <Chevron dir="down" size={24} weight={2.600} />
        </FormScroll>
      </SunkenInner>
    </SunkenOuter>
    <DialogFooter>
      <PushButton $w={146} $default>
        <Label w={31} size={22}>OK</Label>
      </PushButton>
      <PushButton $w={146}>
        <Label w={67} size={22}>Cancel</Label>
      </PushButton>
      <PushButton $w={176}>
        <Label w={155} size={22}>Environments...</Label>
      </PushButton>
      <PushButton $w={192}>
        <Label w={140} size={22}>{"Show Help >>"}</Label>
      </PushButton>
    </DialogFooter>
  </Dialog>
);

/* ---------- attribute table window ---------- */

const TableWindow = styled.section`
  position: absolute;
  left: 2534px;
  top: 874px;
  width: 1234px;
  height: 1056px;
  border: 2px solid;
  border-color: ${LIGHT} #000 #000 ${LIGHT};
  background: ${FACE};
`;
const TableBody = styled.div`
  height: 100%;
  display: flex;
  flex-direction: column;
  padding: 4px 2px 0 2px;
  border: 2px solid;
  border-color: #fff ${MID} ${MID} #fff;
`;
const TableTools = styled.div`
  height: 54px;
  margin: 2px 0 0 6px;
  flex: none;
  display: flex;
  align-items: center;
  padding: 2px 0 4px 2px;
  border-radius: 6px 0 0 6px;
  background: linear-gradient(#fefefe, #f9f9f9 50%, #efefef);
`;
const MaxGlyph = styled.span`
  width: 18px;
  height: 18px;
  border: 2px solid #000;
  border-top-width: 4px;
`;
const GridPane = styled.div`
  width: 1170px;
  border-left: 2px solid ${DARK};
  background: ${FACE};
`;
const Records = styled.div`
  width: 952px;
  border-top: 2px solid ${DARK};
`;
const RecordRow = styled.div`
  display: grid;
  grid-template-columns: 28px 70px 126px 154px 154px 154px 126px 140px;
  height: ${(p) => p.$h || 32}px;
`;
const Raised = styled.div`
  display: flex;
  align-items: center;
  justify-content: center;
  border: 0 solid ${DARK};
  border-width: 0 2px 2px 0;
  background: ${FACE};
  box-shadow: inset -2px -2px 0 #000, inset 2px 2px 0 #fff;
  font: ${(p) => (p.$plain ? 400 : 700)} 22px/30px ${GRID};
  letter-spacing: ${(p) => (p.$plain ? -0.5 : 0.5)}px;
  padding: 0 0 ${(p) => (p.$plain ? 1 : 4)}px ${(p) => (p.$mark ? 0 : 3)}px;
`;
const Cell = styled.div`
  font: 22px/28px ${GRID};
  letter-spacing: ${(p) => (p.$left ? (p.$wide ? -0.35 : -0.8) : -0.23)}px;
  text-align: ${(p) => (p.$left ? "left" : "right")};
  padding: 0 ${(p) => (p.$focus ? 8 : 6)}px 0 4px;
  border: 0 solid ${DARK};
  border-width: 0 2px 2px 0;
  background: #fff;
  ${(p) => p.$focus && "box-shadow: inset 0 0 0 2px #000;"}
`;
const GridScroll = styled.div`
  width: 34px;
  display: flex;
  flex-direction: column;
  align-items: center;
  padding: 12px 2px 12px 0;
  border-left: 2px solid #fff;
  background: ${FACE};
`;
const GridThumb = styled.span`
  width: 30px;
  height: 34px;
  margin: 10px 0 auto;
  background: #cdcdcd;
`;
const FrameColumn = styled.div`
  width: 100%;
  display: flex;
  flex-direction: column;
`;
const RecordNav = styled.div`
  flex: 1;
  display: flex;
  align-items: center;
  padding-left: 22px;
  background: linear-gradient(#fbfbfb, #f8f8f8 50%, #eeeeee);
`;
const NavSlot = styled.span`
  width: ${(p) => p.$w}px;
  display: flex;
  align-items: center;
`;
const NavBar = styled.i`
  width: 4px;
  height: 14px;
  background: #000;
`;
const RecordField = styled.span`
  width: 116px;
  height: 40px;
  display: flex;
  align-items: center;
  justify-content: flex-end;
  padding: 0 5px 1px 0;
  background: #fff;
`;
const TableTab = styled.div`
  width: 214px;
  height: 38px;
  margin-left: 4px;
  display: flex;
  align-items: center;
  padding: 0 0 1px 10px;
  border: 2px solid ${MID};
  border-top: none;
  border-radius: 0 0 6px 6px;
  background: #fff;
`;

const HEADERS = ["Shape *", "elevation", "feat_code", "source_id", "status", "sub_code"];
const RECORDS = [
  ["73.390235", "15730"],
  ["83.414009", "15877"],
  ["82.9606", "15900"],
  ["82.532629", "15928"],
  ["69.7583", "15955"],
  ["69.602304", "15982"],
  ["90.552623", "16092"],
  ["74.515827", "16126"],
  ["67.978125", "16142"],
  ["66.339595", "16155"],
  ["98.640919", "16262"],
  ["99.0959", "16284"],
  ["66.343878", "16318"],
  ["100.769795", "16327"],
  ["66.3113", "16344"],
  ["62.847", "16362"],
  ["66.507257", "16366"],
  ["62.784905", "16390"],
  ["107.731458", "16512"],
  ["93.99455", "16517"],
  ["78.232321", "16544"],
  ["62.934888", "16556"],
  ["61.31827", "16563"],
  ["59.553554", "16576"],
];

const AttributeTable = () => (
  <TableWindow>
    <TableBody>
      <PaneHeader $h={38} $active>
        <Label w={57}>Table</Label>
        <HeaderButtons $lift={4}>
          <MaxGlyph />
          <Cross size={16} h={14} weight={2} />
        </HeaderButtons>
      </PaneHeader>
      <TableTools>
        <ToolButton><OptionsIcon /></ToolButton>
        <DropArrow><Triangle /></DropArrow>
        <Separator />
        <ToolButton><RelatedIcon /></ToolButton>
        <DropArrow><Triangle /></DropArrow>
        <Separator />
        <ToolButton><SelectByAttrIcon /></ToolButton>
        <ToolButton><SwitchSelIcon /></ToolButton>
        <ToolButton><ClearIcon /></ToolButton>
        <ToolButton><ZoomSelIcon /></ToolButton>
        <ToolButton><GrayX /></ToolButton>
      </TableTools>
      <PaneHeader>
        <Label w={188}>spotelevation_mh</Label>
        <HeaderButtons $lift={2}>
          <Cross size={16} h={14} weight={2} />
        </HeaderButtons>
      </PaneHeader>
      <SunkenOuter $h={866} $w={1220}>
        <SunkenInner>
          <FrameColumn>
            <SunkenOuter $h={806} $w={1212}>
              <SunkenInner>
                <GridPane>
                  <Records>
                    <RecordRow $h={34}>
                      <Raised />
                      <Raised $plain>FID</Raised>
                      {HEADERS.map((h) => (
                        <Raised key={h}>{h}</Raised>
                      ))}
                    </RecordRow>
                    {RECORDS.map(([elevation, id], i) => (
                      <RecordRow key={id}>
                        <Raised $mark>{i === 0 && <Triangle dir="right" w={8} h={14} />}</Raised>
                        <Cell $focus={i === 0}>{i}</Cell>
                        <Cell $left>Point</Cell>
                        <Cell>{elevation}</Cell>
                        <Cell>3000</Cell>
                        <Cell>{`133000${id}`}</Cell>
                        <Cell $left $wide>Unchanged</Cell>
                        <Cell>300000</Cell>
                      </RecordRow>
                    ))}
                  </Records>
                </GridPane>
                <GridScroll>
                  <Chevron dir="up" size={16} weight={3} />
                  <GridThumb />
                  <Chevron dir="down" size={16} weight={3} />
                </GridScroll>
              </SunkenInner>
            </SunkenOuter>
            <RecordNav>
              <NavSlot $w={48}>
                <NavBar />
                <Triangle dir="left" w={12} h={14} />
              </NavSlot>
              <NavSlot $w={28}>
                <Triangle dir="left" w={8} h={14} />
              </NavSlot>
              <RecordField>
                <Label w={14} color="#4a0a2a">1</Label>
              </RecordField>
              <NavSlot $w={60}>
                <IconSlot $m="0 0 0 20px">
                  <Triangle dir="right" w={8} h={14} />
                </IconSlot>
              </NavSlot>
              <NavSlot $w={30}>
                <Triangle dir="right" w={12} h={14} />
                <NavBar />
              </NavSlot>
              <Separator />
              <ToolButton $on><AllRecordsIcon /></ToolButton>
              <ToolButton><SelectedRecordsIcon /></ToolButton>
              <Separator />
              <IconSlot $m="0 0 1px 8px">
                <Label w={247}>(0 out of 1478 Selected)</Label>
              </IconSlot>
            </RecordNav>
          </FrameColumn>
        </SunkenInner>
      </SunkenOuter>
      <TableTab>
        <Label w={189}>spotelevation_mh</Label>
      </TableTab>
    </TableBody>
  </TableWindow>
);

/* ---------- main window ---------- */

const MENUS = [
  ["File", 35],
  ["Edit", 39],
  ["View", 50],
  ["Bookmarks", 116],
  ["Insert", 57],
  ["Selection", 94],
  ["Geoprocessing", 156],
  ["Customize", 111],
  ["Windows", 97],
  ["Help", 51],
];

const Buttons = ({ icons }) =>
  icons.map((I, i) =>
    I === "|" ? (
      <Separator key={i} />
    ) : I === "v" ? (
      <DropArrow key={i}>
        <Triangle />
      </DropArrow>
    ) : (
      <ToolButton key={i}>
        <I />
      </ToolButton>
    )
  );

const Redo = () => <UndoIcon flip color="#b3b3b3" />;
const ZoomIn = () => <Magnifier sign="+" />;
const ZoomOut = () => <Magnifier sign="-" />;
const Forward = () => <BackIcon flip gray />;

const OverflowGrip = ({ gap }) => (
  <Overflow $gap={gap}>
    <OverflowBar />
    <Triangle w={12} h={7} />
  </Overflow>
);

export default function App() {
  return (
    <Frame>
      <Global />
      <Defs />
      <TitleBar>
        <AppLogo />
        <Label w={192}>Untitled - ArcMap</Label>
        <WindowButtons $gap={72}>
          <Svg viewBox="0 0 20 20" $w={20}>
            <path d="M0 10h20" stroke="#000" strokeWidth="2" />
          </Svg>
          <Svg viewBox="0 0 20 20" $w={20}>
            <path d="M1 5h14v14H1zM5 5V1h14v14h-4" fill="none" stroke="#000" strokeWidth="2" />
          </Svg>
          <Cross size={20} weight={0.9} />
        </WindowButtons>
      </TitleBar>
      <MenuBar>
        {MENUS.map(([name, w]) => (
          <Label key={name} w={w}>{name}</Label>
        ))}
      </MenuBar>
      <ToolbarRow>
        <Toolbar>
          <Grip />
          <Buttons icons={[NewIcon, OpenIcon, SaveIcon, PrintIcon, "|", CutIcon, CopyIcon, PasteIcon, GrayX, "|", UndoIcon, Redo, "|", AddDataIcon, "v", "|"]} />
          <ScaleBox>
            <Label w={86} color="#2a0a3a">1:10,100</Label>
            <Chevron dir="down" size={18} weight={1.300} color="#444" />
          </ScaleBox>
          <Buttons icons={["|", EditorIcon, "|", TocWindowIcon, CatalogIcon, SearchWindowIcon, ToolboxIcon, PythonIcon, "|", ModelIcon]} />
          <OverflowGrip gap={4} />
        </Toolbar>
      </ToolbarRow>
      <ToolbarRow>
        <Toolbar>
          <Grip />
          <Buttons icons={[ZoomIn, ZoomOut, HandIcon, GlobeIcon, "|", FixedIn, FixedOut, "|", BackIcon, Forward, "|", SelectIcon, "v", ClearIcon, "|"]} />
          <ToolButton $on><PointerIcon /></ToolButton>
          <Buttons icons={["|", InfoIcon, BoltIcon, PopupIcon, "|", MeasureIcon, "|", FindIcon, RouteIcon, GoToXYIcon, "|", TimeIcon, "|", ViewerIcon]} />
          <OverflowGrip gap={4} />
        </Toolbar>
      </ToolbarRow>
      <Main>
        <TocPane>
          <PaneHeader>
            <Label w={192}>Table Of Contents</Label>
            <HeaderButtons>
              <Svg viewBox="0 0 14 18" $w={14} $h={18}>
                <path d="M3 1h8v9H3zM9 1v9M0 11h14M7 11v7" fill="none" stroke="#000" strokeWidth="2" />
              </Svg>
              <Cross size={16} h={14} weight={2} />
            </HeaderButtons>
          </PaneHeader>
          <TocTools>
            <ToolButton $on><DrawingOrderIcon /></ToolButton>
            <Buttons icons={[SourceIcon, VisibilityIcon, SelectionListIcon, "|", OptionsIcon]} />
          </TocTools>
          <Tree>
            <TreeRow $indent={16}>
              <Expander $drop={6} />
              <IconSlot $m="2px 9px 0 12px"><LayerStackIcon /></IconSlot>
              <Label w={72} bold>Layers</Label>
            </TreeRow>
            <TreeRow $indent={54}>
              <Expander $drop={6} />
              <CheckBox>
                <Svg viewBox="0 0 18 18" $w={18}>
                  <path d="M3 8l4 5 8-10" fill="none" stroke="#000" strokeWidth="3.600" />
                </Svg>
              </CheckBox>
              <SelectedName>
                <Label w={189} color="#fff">spotelevation_mh</Label>
              </SelectedName>
            </TreeRow>
            <TreeRow $indent={122}>
              <Svg viewBox="-6 -6 12 12" $w={12} shapeRendering="crispEdges">
                <PointSymbol />
              </Svg>
            </TreeRow>
          </Tree>
        </TocPane>
        <MapPane>
          <MapInner>
            <MapColumn>
              <SurveyMap />
              <MapFooter>
                <FooterTools>
                  <ViewToggle>
                    <Svg viewBox="0 0 12 12" $w={14}>
                      <rect x="1" y="1" width="10" height="10" fill="#a5d48c" stroke="#333" />
                    </Svg>
                  </ViewToggle>
                  <Svg viewBox="0 0 12 14" $w={14} $h={16}>
                    <path d="M1 1h7l3 3v9H1z" fill="#fff" stroke="#444" strokeWidth="1.400" />
                    <path d="M3.500 6h5v4h-5z" fill="#9ab" />
                  </Svg>
                  <Separator />
                  <Svg viewBox="0 0 16 16" $w={16}>
                    <path d="M2 7a6 6 0 0111-2M14 9a6 6 0 01-11 2" fill="none" stroke="#1f5fae" strokeWidth="2" />
                    <path d="M14 1v5H9zM2 15v-5h5z" fill="#1f5fae" />
                  </Svg>
                  <Svg viewBox="0 0 12 12" $w={12}>
                    <path d="M3 1v10M9 1v10" stroke="#1f5fae" strokeWidth="3" />
                  </Svg>
                </FooterTools>
                <HTrack>
                  <Chevron dir="left" size={16} weight={2.600} />
                  <HThumb $m="0 14px 0 11px" />
                  <Chevron dir="right" size={16} weight={2.600} />
                </HTrack>
              </MapFooter>
            </MapColumn>
            <VTrack>
              <Chevron dir="up" size={16} weight={2.600} />
              <VThumb />
              <Chevron dir="down" size={16} weight={2.600} />
            </VTrack>
          </MapInner>
        </MapPane>
      </Main>
      <StatusBar>
        <Label w={294} size={23}>991989.346  234263.211 Feet</Label>
      </StatusBar>
      <TopoDialog />
      <AttributeTable />
    </Frame>
  );
}
